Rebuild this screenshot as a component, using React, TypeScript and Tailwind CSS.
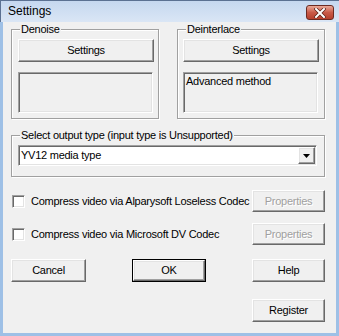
const raised =
  "border border-t-white border-l-white border-r-[#696969] border-b-[#696969] shadow-[inset_-1px_-1px_0_#a0a0a0,inset_1px_1px_0_#e3e3e3] bg-[#f0f0f0]";
const sunken =
  "border border-t-[#a0a0a0] border-l-[#a0a0a0] border-r-white border-b-white shadow-[inset_1px_1px_0_#696969,inset_-1px_-1px_0_#e3e3e3]";

function Group({
  label,
  className,
  children,
}: {
  label: string;
  className: string;
  children: React.ReactNode;
}) {
  return (
    <div
      className={`relative border border-[#a0a0a0] shadow-[inset_1px_1px_0_#fff,1px_1px_0_#fff] ${className}`}
    >
      <span className="absolute -top-[8px] left-[8px] bg-[#f0f0f0] px-[1px] leading-[14px] whitespace-nowrap">
        {label}
      </span>
      {children}
    </div>
  );
}

function Button({
  label,
  className = "",
  disabled = false,
}: {
  label: string;
  className?: string;
  disabled?: boolean;
}) {
  return (
    <div
      className={`${raised} flex items-center justify-center ${className} ${
        disabled ? "text-[#a0a0a0] [text-shadow:1px_1px_0_#fff]" : "text-black"
      }`}
    >
      {label}
    </div>
  );
}

function CheckRow({ label }: { label: string }) {
  return (
    <div className="flex h-[22px] items-center">
      <div className={`${sunken} ml-[1px] h-[13px] w-[13px] bg-white`} />
      <span className="ml-[6px] flex-1 whitespace-nowrap">{label}</span>
      <Button label="Properties" disabled className="h-[22px] w-[73px]" />
    </div>
  );
}

export default function App() {
  return (
    <div className="flex h-[336px] w-[339px] flex-col bg-[#9ec0e6] font-['Liberation_Sans',Arial,sans-serif] text-[11px] tracking-[-0.25px] text-black">
      {/* Title bar */}
      <div className="flex h-[22px] items-start justify-between bg-gradient-to-b from-[#c4d7ef] to-[#dae6f5] shadow-[inset_1px_1px_0_#5b7192]">
        <span className="pl-[8px] pt-[4px] text-[12px] leading-[14px] tracking-normal text-black">
          Settings
        </span>
        <div className="mr-[5px] mt-[5px] flex h-[15px] w-[28px] items-center justify-center rounded-[3px] border border-[#6b2a22] bg-gradient-to-b from-[#e9a898] via-[#c95a48] to-[#b63f2c]">
          <svg width="12" height="10" viewBox="0 0 12 10">
            <path
              d="M2 1 L10 9 M10 1 L2 9"
              stroke="#5a2018"
              strokeWidth="3.4"
              strokeLinecap="square"
            />
            <path
              d="M2 1 L10 9 M10 1 L2 9"
              stroke="#fff"
              strokeWidth="2"
              strokeLinecap="square"
            />
          </svg>
        </div>
      </div>

      {/* Client area */}
      <div className="mx-[3px] mb-[3px] flex flex-1 flex-col bg-[#f0f0f0] pl-[8px] pr-[11px] pt-[7px]">
        <div className="flex gap-[18px]">
          <Group label="Denoise" className="h-[90px] w-[148px] pl-[6px] pt-[9px]">
            <Button label="Settings" className="h-[23px] w-[136px]" />
            <div className={`${sunken} mt-[10px] h-[41px] w-[135px]`} />
          </Group>
          <Group label="Deinterlace" className="h-[90px] w-[148px] pl-[5px] pt-[9px]">
            <Button label="Settings" className="h-[23px] w-[136px]" />
            <div className={`${sunken} mt-[10px] h-[41px] w-[135px] px-[2px] pt-[2px] leading-[13px]`}>
              Advanced method
            </div>
          </Group>
        </div>

        <Group
          label="Select output type (input type is Unsupported)"
          className="mt-[16px] h-[42px] w-[314px] pl-[6px] pt-[9px]"
        >
          <div className={`${sunken} flex h-[21px] w-[299px] items-stretch bg-white p-[1px]`}>
            <span className="flex-1 pl-[1px] leading-[17px]">YV12 media type</span>
            <div className={`${raised} flex w-[17px] items-center justify-center`}>
              <svg width="7" height="4" viewBox="0 0 7 4">
                <path d="M0 0 H7 L3.5 4 Z" fill="#000" />
              </svg>
            </div>
          </div>
        </Group>

        <div className="mt-[13px]">
          <CheckRow label="Compress video via Alparysoft Loseless Codec" />
        </div>
        <div className="mt-[11px]">
          <CheckRow label="Compress video via Microsoft DV Codec" />
        </div>

        <div className="mt-[14px] flex h-[23px] justify-between">
          <Button label="Cancel" className="w-[75px]" />
          <div className="w-[74px] border border-black">
            <Button label="OK" className="h-full w-full" />
          </div>
          <Button label="Help" className="w-[73px]" />
        </div>
        <div className="mt-[17px] flex h-[23px] justify-end">
          <Button label="Register" className="w-[73px]" />
        </div>
      </div>
    </div>
  );
}
